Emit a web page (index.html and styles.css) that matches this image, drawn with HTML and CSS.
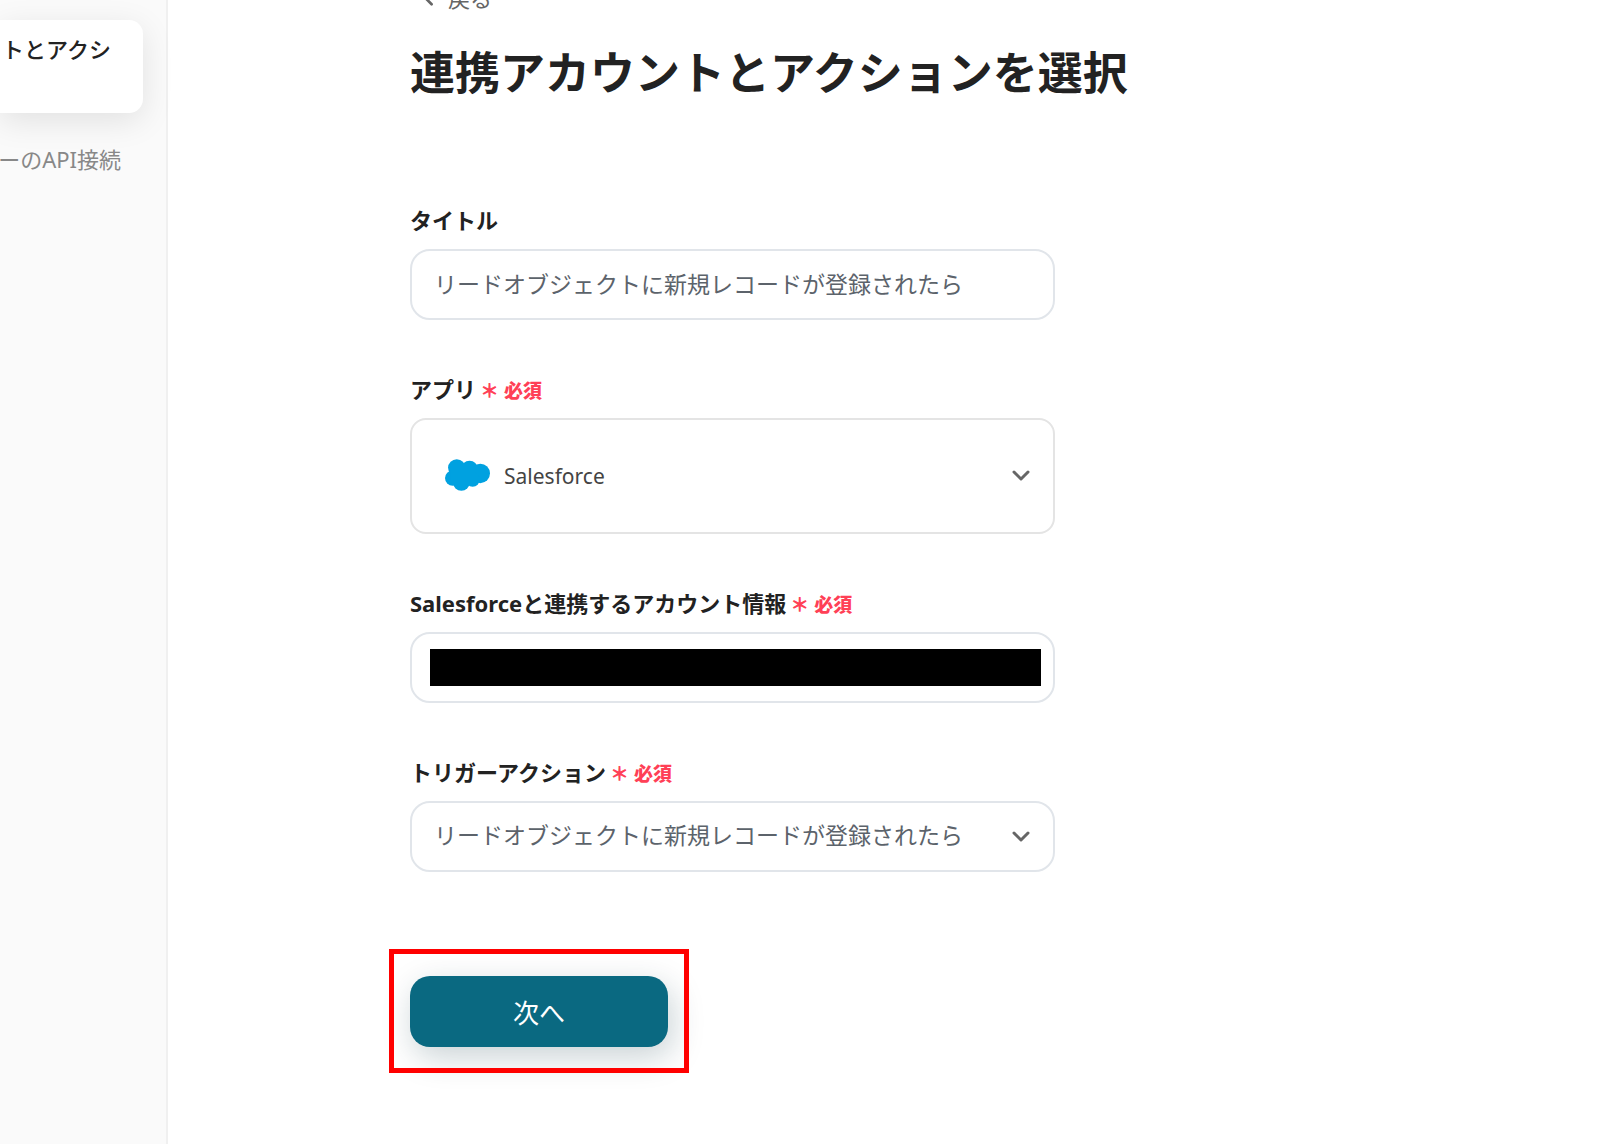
FILE: index.html
```html
<!DOCTYPE html>
<html lang="ja">
<head>
  <meta charset="UTF-8">
  <meta name="viewport" content="width=device-width, initial-scale=1.0">
  <title>連携アカウントとアクションを選択</title>
  <link rel="stylesheet" href="styles.css">
</head>
<body>
  <div class="layout">
    <aside class="sidebar">
      <div class="step active">トとアクシ</div>
      <div class="step">ーのAPI接続</div>
    </aside>
    <main>
      <a class="back" href="#">
        <svg class="back-icon" viewBox="0 0 12 20"><path d="M10 2L2 10l8 8"/></svg>
        戻る
      </a>
      <h1>連携アカウントとアクションを選択</h1>
      <form>
        <div class="field">
          <label for="title">タイトル</label>
          <input class="control" id="title" type="text" value="リードオブジェクトに新規レコードが登録されたら">
        </div>
        <div class="field">
          <label for="app">アプリ<span class="required">＊ 必須</span></label>
          <div class="select-wrap">
            <select class="control app-select" id="app">
              <option>Salesforce</option>
            </select>
            <svg class="app-logo" viewBox="0 0 44 31">
              <g fill="#00a1e0">
                <circle cx="11.500" cy="8.500" r="8.500"/>
                <circle cx="24" cy="9.500" r="8"/>
                <circle cx="34.500" cy="14" r="9.500"/>
                <circle cx="7.500" cy="18.500" r="7.500"/>
                <circle cx="16" cy="23" r="8"/>
                <circle cx="27" cy="20" r="7"/>
                <path d="M5 10h25v12H5z"/>
              </g>
            </svg>
            <svg class="chevron" viewBox="0 0 18 12"><path d="M2 2l7 7 7-7"/></svg>
          </div>
        </div>
        <div class="field">
          <label for="account">Salesforceと連携するアカウント情報<span class="required">＊ 必須</span></label>
          <div class="control account">
            <input id="account" type="text">
          </div>
        </div>
        <div class="field">
          <label for="action">トリガーアクション<span class="required">＊ 必須</span></label>
          <div class="select-wrap">
            <select class="control" id="action">
              <option>リードオブジェクトに新規レコードが登録されたら</option>
            </select>
            <svg class="chevron" viewBox="0 0 18 12"><path d="M2 2l7 7 7-7"/></svg>
          </div>
        </div>
        <div class="submit">
          <button class="next-btn" type="button">次へ</button>
        </div>
      </form>
    </main>
  </div>
</body>
</html>
```
FILE: styles.css
```css
:root {
  --primary: #0a6981;
  --required: #ff4056;
  --text: #222;
  --muted: #5c636b;
  --border: #e1e5ea;
  --side: #fafafa;
}
* { box-sizing: border-box; }
body {
  margin: 0;
  font-family: "Noto Sans", "Noto Sans CJK JP", sans-serif;
  font-size: 22px;
  color: var(--text);
  background: #fff;
}
.layout {
  display: flex;
  min-height: 100vh;
  overflow: hidden;
}
/* Sidebar */
.sidebar {
  flex: 0 0 168px;
  min-width: 0;
  padding-top: 20px;
  background: var(--side);
  border-right: 2px solid #f0f0f0;
}
.step {
  display: flex;
  justify-content: flex-end;
  padding: 30px 45px 0 0;
  line-height: 32px;
  white-space: nowrap;
  color: #888;
}
.step.active {
  height: 93px;
  margin-right: 23px;
  padding: 13px 32px 0 0;
  font-weight: 500;
  color: var(--text);
  background: #fff;
  border-radius: 0 14px 14px 0;
  box-shadow: 0 8px 32px rgba(0,0,0,0.1);
}
/* Form */
main {
  flex: 1;
  padding: 0 32px 72px 242px;
}
.back {
  display: flex;
  align-items: center;
  gap: 14px;
  height: 32px;
  margin-top: -19px;
  padding-left: 12px;
  color: #666;
  text-decoration: none;
}
.back-icon {
  width: 12px;
  height: 18px;
}
.back-icon path,
.chevron path {
  fill: none;
  stroke: #666;
  stroke-width: 3;
  stroke-linecap: round;
  stroke-linejoin: round;
}
h1 {
  margin: 28px 0 98px;
  font-size: 45px;
  line-height: 64px;
  font-weight: 700;
}
form { max-width: 645px; }
.field { margin-bottom: 52px; }
label {
  display: block;
  margin-bottom: 12px;
  line-height: 34px;
  font-weight: 700;
}
.required {
  margin-left: 4px;
  font-size: 19px;
  font-weight: 900;
  line-height: 1;
  color: var(--required);
}
.control {
  display: block;
  width: 100%;
  height: 71px;
  padding: 0 22px 3px;
  font: inherit;
  font-size: 23px;
  color: var(--muted);
  background: #fff;
  border: 2px solid var(--border);
  border-radius: 20px;
  appearance: none;
}
.select-wrap { position: relative; }
.app-select {
  height: 116px;
  padding: 0 92px;
  font-size: 21px;
  color: #444;
  border-color: #e4e4e4;
  border-radius: 16px;
}
.app-logo {
  position: absolute;
  top: 41px;
  left: 35px;
  width: 45px;
  height: 32px;
}
.chevron {
  position: absolute;
  top: 50%;
  right: 25px;
  width: 18px;
  height: 12px;
  margin-top: -6px;
}
.account { padding: 15px 12px 15px 18px; }
.account input {
  display: block;
  width: 100%;
  height: 100%;
  padding: 0 8px;
  font: inherit;
  color: #fff;
  background: #000;
  border: none;
}
.submit {
  position: relative;
  width: 258px;
  margin-top: 104px;
}
/* Red frame around the button */
.submit::after {
  content: "";
  position: absolute;
  inset: -27px -21px -26px;
  border: 5px solid #f00;
  pointer-events: none;
}
.next-btn {
  display: block;
  width: 100%;
  height: 71px;
  font: inherit;
  font-size: 26px;
  color: #fff;
  background: var(--primary);
  border: none;
  border-radius: 20px;
  box-shadow: 4px 10px 32px rgba(10,50,65,0.22);
  cursor: pointer;
}
```
